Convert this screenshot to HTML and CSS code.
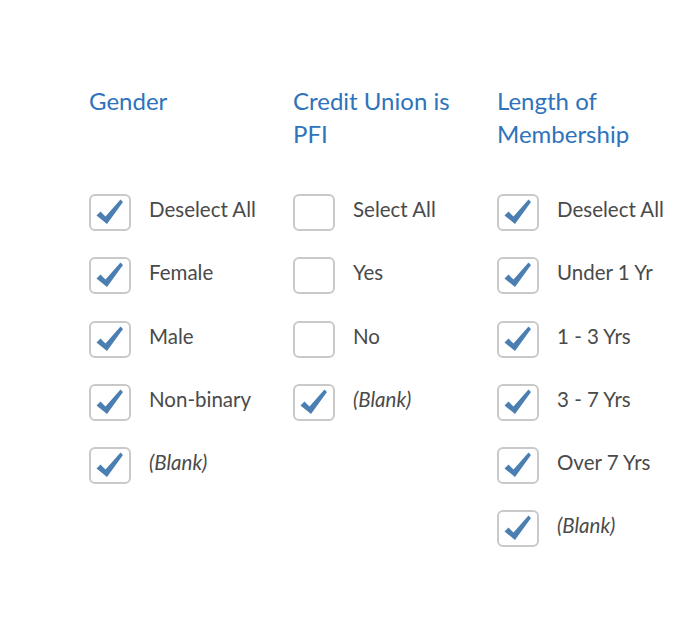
FILE: index.html
```html
<!DOCTYPE html>
<html lang="en">
<head>
    <meta charset="UTF-8">
    <meta name="viewport" content="width=device-width, initial-scale=1.0">
    <title>Filters</title>
    <link rel="stylesheet" href="styles.css">
</head>
<body>

<div class="filters">

    <!-- Gender -->
    <div class="column">
        <h2>Gender</h2>
        <ul class="options">
            <li><span class="box checked"></span><span class="label">Deselect All</span></li>
            <li><span class="box checked"></span><span class="label">Female</span></li>
            <li><span class="box checked"></span><span class="label">Male</span></li>
            <li><span class="box checked"></span><span class="label">Non-binary</span></li>
            <li><span class="box checked"></span><span class="label blank">(Blank)</span></li>
        </ul>
    </div>

    <!-- Credit Union is PFI -->
    <div class="column">
        <h2>Credit Union is PFI</h2>
        <ul class="options">
            <li><span class="box"></span><span class="label">Select All</span></li>
            <li><span class="box"></span><span class="label">Yes</span></li>
            <li><span class="box"></span><span class="label">No</span></li>
            <li><span class="box checked"></span><span class="label blank">(Blank)</span></li>
        </ul>
    </div>

    <!-- Length of Membership -->
    <div class="column">
        <h2>Length of Membership</h2>
        <ul class="options">
            <li><span class="box checked"></span><span class="label">Deselect All</span></li>
            <li><span class="box checked"></span><span class="label">Under 1 Yr</span></li>
            <li><span class="box checked"></span><span class="label">1 - 3 Yrs</span></li>
            <li><span class="box checked"></span><span class="label">3 - 7 Yrs</span></li>
            <li><span class="box checked"></span><span class="label">Over 7 Yrs</span></li>
            <li><span class="box checked"></span><span class="label blank">(Blank)</span></li>
        </ul>
    </div>

</div>

<script>
    // Pone la marca de verificacion en cada casilla marcada
    const tick = '<svg viewBox="0 0 42 37" width="42" height="37"><path d="M7.5 21.5 L11.5 17.5 L16.5 22.5 L31.5 5.5 L34 8 L18 30 Z" fill="#4b7fb2"/></svg>';
    document.querySelectorAll('.box.checked').forEach(function (box) {
        box.innerHTML = tick;
    });
</script>

</body>
</html>
```

FILE: styles.css
```css
body {
    margin: 0;
    background-color: #fff;
    font-family: Lato, "Noto Sans", sans-serif;
}

.filters {
    display: flex;
    padding: 84px 0 0 89px;
}

.column {
    width: 204px;
    flex-shrink: 0;
}

h2 {
    margin: 0;
    height: 66px;
    width: 190px;
    font-size: 24px;
    font-weight: 400;
    line-height: 33px;
    color: #2e73bb;
}

.options {
    list-style: none;
    margin: 44px 0 0 0;
    padding: 0;
}

.options li {
    display: flex;
    align-items: center;
    height: 37px;
    margin-bottom: 26.3px;
    font-size: 20.5px;
    color: #4a4a4a;
}

.label {
    padding-bottom: 7px;
    white-space: nowrap;
}

.blank {
    font-style: italic;
}

.box {
    box-sizing: border-box;
    width: 42px;
    height: 37px;
    margin-right: 18px;
    border: 2px solid #c9c9c9;
    border-radius: 6px;
    flex-shrink: 0;
    position: relative;
}

.box svg {
    position: absolute;
    left: -2px;
    top: -2px;
}
```
